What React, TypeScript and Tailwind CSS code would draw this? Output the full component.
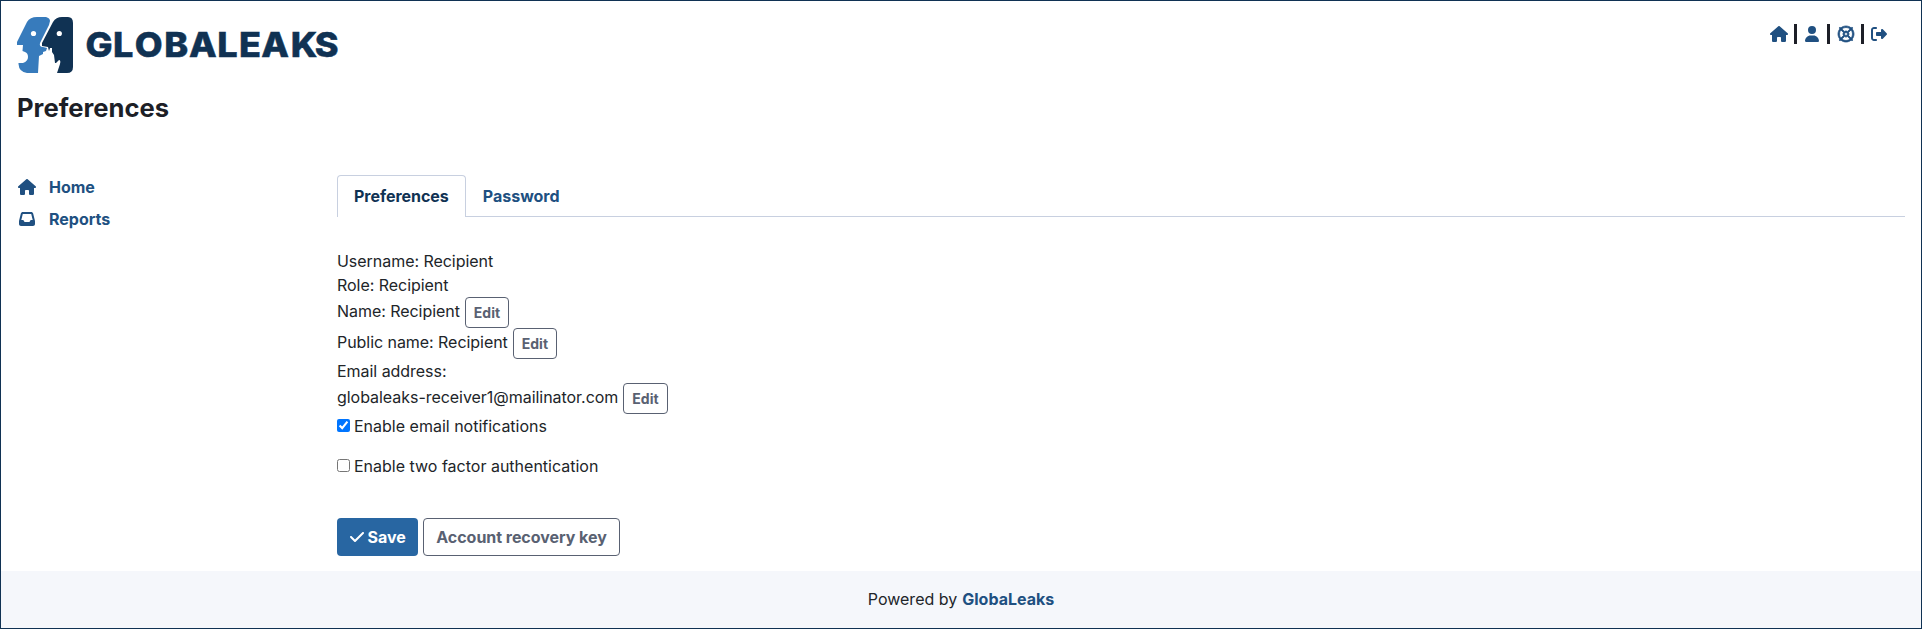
import { FaHouse, FaUser, FaRegLifeRing, FaRightFromBracket, FaInbox, FaCheck } from "react-icons/fa6";

function Logo() {
  return (
    <svg width="322" height="56" viewBox="0 0 322 56" className="block" role="img" aria-label="GlobaLeaks">
      <path fill="#377bbc" d="M10 5Q13 0 20 0H29Q33 1 33 4L32 8L23 26Q22 30 26 30L30 31L29 34L26 35V37L22 39L21 56H10Q2 55 1.500 47V46L6 46Q11 44 11 40Q11 36 8 35L5.500 34L6 28H0V25Z" />
      <path fill="#103253" d="M36 5Q39 0 45 0H51Q56 0 56 6V50Q56 56 50 56H40L43 47Q44 43 42 43L39 46H38L37 38L35 35V31L33 31L32 34L31 30L25 29V26Z" />
      <circle cx="16.5" cy="16.5" r="2.6" fill="#fff" />
      <circle cx="42.3" cy="16.5" r="2.6" fill="#fff" />
      <text
        transform="scale(1.06 1)"
        x="64.600 90.500 111 139 162.300 189 209.500 230.500 258.200 281"
        y="40"
        className="fill-[#103253] stroke-[#103253] font-['Inter',sans-serif] text-[34px] font-extrabold [stroke-width:0.5]"
      >
        GLOBALEAKS
      </text>
    </svg>
  );
}

function EditButton() {
  return (
    <button className="h-[31px] rounded-[4px] border border-[#596172] px-2 text-sm leading-[21px] font-bold text-[#596172]">
      Edit
    </button>
  );
}

function Separator() {
  return <span className="h-[20px] w-[3px] bg-[#1d1f27]" />;
}

const link = "text-[#205081]";

export default function App() {
  return (
    <div className="flex h-[629px] flex-col border border-[#103253] bg-white font-['Inter',sans-serif] text-base text-[#212529]">
      <header className="flex items-start justify-between pt-4 pr-[34px] pl-4">
        <Logo />
        <nav className="flex h-[34px] items-center text-[#205081]">
          <FaHouse className="mr-[6px] h-4 w-[18px]" />
          <Separator />
          <FaUser className="mx-2 h-4 w-[14px]" />
          <Separator />
          <FaRegLifeRing className="mr-[7px] ml-2 size-4 overflow-visible stroke-current [stroke-width:24]" />
          <Separator />
          <FaRightFromBracket className="ml-[7px] size-4" />
        </nav>
      </header>
      <h1 className="mt-4 h-[38px] pl-4 text-[25.6px] leading-[38px] font-bold text-[#1d1f27]">Preferences</h1>
      <div className="mt-11 flex h-[400px] pr-4">
        <aside className={`w-[320px] shrink-0 pl-4 font-bold ${link}`}>
          <a className="flex h-8 items-center">
            <FaHouse className="mr-[13px] ml-px h-4 w-[18px]" />
            Home
          </a>
          <a className="flex h-8 items-center">
            <FaInbox className="mr-[14px] ml-[2px] size-4" />
            Reports
          </a>
        </aside>
        <main className="grow pl-4">
          <div className="mt-1 flex h-[42px] border-b border-[#c8d0e0] font-bold">
            <a className="h-[42px] rounded-t-[4px] border border-b-0 border-[#c8d0e0] bg-white px-4 pt-2 tracking-[-0.03px] text-[#103253]">
              Preferences
            </a>
            <a className={`px-[17px] pt-[9px] ${link}`}>Password</a>
          </div>
          <div className="mt-8">
            <div className="tracking-[-0.04px]">Username: Recipient</div>
            <div className="tracking-[-0.04px]">Role: Recipient</div>
            <div className="flex h-[31px] items-center gap-[5px]">
              <span className="pb-[3px] tracking-[-0.05px]">Name: Recipient</span>
              <EditButton />
            </div>
            <div className="flex h-[31px] items-center gap-[5px]">
              <span className="pb-[3px] tracking-[-0.05px]">Public name: Recipient</span>
              <EditButton />
            </div>
            <div className="tracking-[-0.04px]">Email address:</div>
            <div className="flex h-[31px] items-center gap-[5px]">
              <span className="pb-[3px] tracking-[-0.04px]">globaleaks-receiver1@mailinator.com</span>
              <EditButton />
            </div>
            <label className="flex items-center gap-1">
              <input type="checkbox" defaultChecked className="mb-px size-[13px]" />
              Enable email notifications
            </label>
            <label className="mt-4 flex items-center gap-1">
              <input type="checkbox" className="mb-px size-[13px]" />
              Enable two factor authentication
            </label>
          </div>
          <div className="mt-10 flex gap-[5px] font-bold">
            <button className="flex h-[38px] items-center gap-1 rounded-[4px] bg-[#2866a2] px-[12.5px] text-white">
              <FaCheck className="h-4 w-[14px]" />
              Save
            </button>
            <button className="h-[38px] rounded-[4px] border border-[#596172] px-3 tracking-[-0.04px] text-[#596172]">
              Account recovery key
            </button>
          </div>
        </main>
      </div>
      <footer className="flex grow items-center justify-center gap-[5px] bg-[#f5f7fb] pb-px">
        <span>Powered by</span>
        <a className={`font-bold ${link}`}>GlobaLeaks</a>
      </footer>
    </div>
  );
}
